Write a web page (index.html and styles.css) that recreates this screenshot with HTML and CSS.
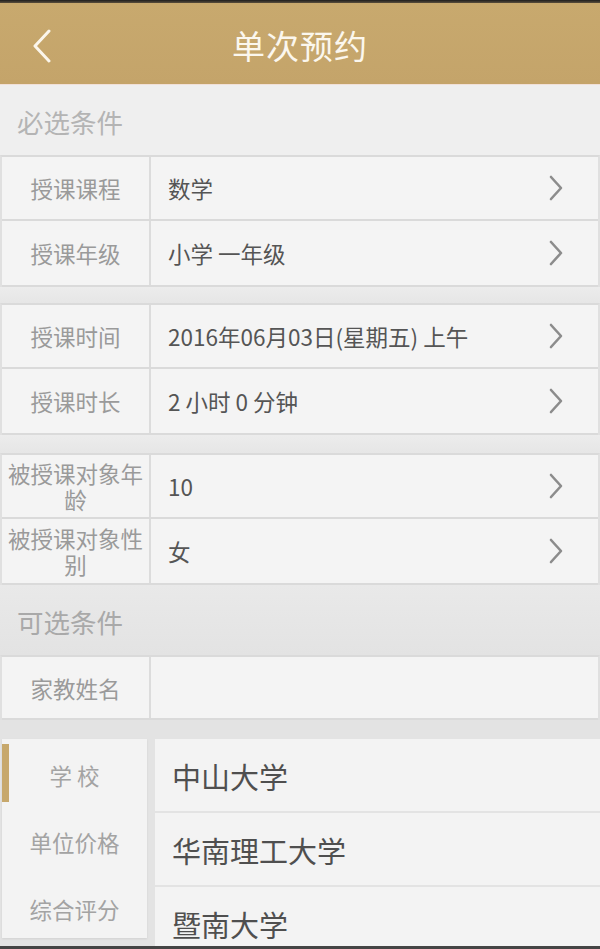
FILE: index.html
```html
<!DOCTYPE html>
<html lang="zh">
<head>
<meta charset="utf-8">
<title>单次预约</title>
<link rel="stylesheet" href="styles.css">
</head>
<body>
<div class="screen">
  <div class="topline"></div>
  <header class="appbar">
    <svg class="back" width="20" height="34" viewBox="0 0 20 34"><polyline points="17,2 3,17 17,32" fill="none" stroke="#fbf6ec" stroke-width="3" stroke-linecap="round" stroke-linejoin="round"/></svg>
    <h1 class="title">单次预约</h1>
  </header>
  <div class="pinkline"></div>

  <div class="section-title">必选条件</div>

  <div class="group">
    <div class="row"><div class="label">授课课程</div><div class="value">数学</div><svg class="chev" width="16" height="26" viewBox="0 0 16 26"><polyline points="3,2 13,13 3,24" fill="none" stroke="#8c8c8c" stroke-width="2.6" stroke-linecap="round" stroke-linejoin="round"/></svg></div>
    <div class="row"><div class="label">授课年级</div><div class="value">小学 一年级</div><svg class="chev" width="16" height="26" viewBox="0 0 16 26"><polyline points="3,2 13,13 3,24" fill="none" stroke="#8c8c8c" stroke-width="2.6" stroke-linecap="round" stroke-linejoin="round"/></svg></div>
  </div>
  <div class="gap g16"></div>
  <div class="group">
    <div class="row"><div class="label">授课时间</div><div class="value">2016年06月03日(星期五) 上午</div><svg class="chev" width="16" height="26" viewBox="0 0 16 26"><polyline points="3,2 13,13 3,24" fill="none" stroke="#8c8c8c" stroke-width="2.6" stroke-linecap="round" stroke-linejoin="round"/></svg></div>
    <div class="row"><div class="label">授课时长</div><div class="value">2 小时 0 分钟</div><svg class="chev" width="16" height="26" viewBox="0 0 16 26"><polyline points="3,2 13,13 3,24" fill="none" stroke="#8c8c8c" stroke-width="2.6" stroke-linecap="round" stroke-linejoin="round"/></svg></div>
  </div>
  <div class="gap g18"></div>
  <div class="group">
    <div class="row"><div class="label two">被授课对象年龄</div><div class="value">10</div><svg class="chev" width="16" height="26" viewBox="0 0 16 26"><polyline points="3,2 13,13 3,24" fill="none" stroke="#8c8c8c" stroke-width="2.6" stroke-linecap="round" stroke-linejoin="round"/></svg></div>
    <div class="row"><div class="label two">被授课对象性别</div><div class="value">女</div><svg class="chev" width="16" height="26" viewBox="0 0 16 26"><polyline points="3,2 13,13 3,24" fill="none" stroke="#8c8c8c" stroke-width="2.6" stroke-linecap="round" stroke-linejoin="round"/></svg></div>
  </div>

  <div class="section-title dark">可选条件</div>

  <div class="group">
    <div class="row short"><div class="label">家教姓名</div><div class="value"></div></div>
  </div>
  <div class="gap g18 darkgap"></div>

  <div class="panel">
    <nav class="menu">
      <div class="menu-item active">学 校</div>
      <div class="menu-item">单位价格</div>
      <div class="menu-item">综合评分</div>
    </nav>
    <ul class="list">
      <li>中山大学</li>
      <li>华南理工大学</li>
      <li>暨南大学</li>
    </ul>
  </div>
  <div class="bottomline"></div>
</div>
</body>
</html>
```
FILE: styles.css
```css
* { box-sizing: border-box; }
html, body { margin: 0; padding: 0; }
body {
  background: #efefef;
  font-family: "Noto Sans CJK SC", "Roboto", "Noto Sans", sans-serif;
}
.screen {
  width: 600px;
  height: 949px;
  overflow: hidden;
  display: flex;
  flex-direction: column;
  background: #efefef;
}
.topline {
  height: 3px;
  background: linear-gradient(#1e1e1e, #5a4f3c);
  flex: none;
}
.appbar {
  height: 81px;
  flex: none;
  background: linear-gradient(#c8a96e, #c4a46a);
  display: flex;
  align-items: center;
  justify-content: center;
  position: relative;
}
.back {
  position: absolute;
  left: 32px;
  top: 26px;
}
.title {
  margin: 0;
  color: #fbf7ee;
  font-size: 33px;
  font-weight: 400;
  letter-spacing: 1px;
  padding-top: 2px;
}
.pinkline {
  height: 1px;
  background: #f1e0d8;
  flex: none;
}
.section-title {
  height: 70px;
  flex: none;
  display: flex;
  align-items: center;
  padding-left: 17px;
  padding-top: 2px;
  font-size: 26.5px;
  color: #b4b4b4;
}
.section-title.dark {
  background: linear-gradient(#e9e9e9, #e3e3e3);
  color: #a9a9a9;
}
.group {
  flex: none;
  border-top: 2px solid #dadada;
  border-left: 2px solid #e0e0e0;
  border-right: 2px solid #e0e0e0;
  background: #f4f4f4;
}
.row {
  height: 66px;
  display: flex;
  align-items: center;
  border-bottom: 2px solid #dadada;
}
.row:first-child { height: 64px; }
.row.short { height: 63px; }
.label {
  width: 149px;
  align-self: stretch;
  display: flex;
  align-items: center;
  justify-content: center;
  text-align: center;
  border-right: 2px solid #dcdcdc;
  font-size: 22.5px;
  color: #9a9a9a;
  line-height: 26px;
  flex: none;
}
.label.two {
  padding: 0 3px;
  font-size: 22.5px;
}
.value {
  flex: 1;
  padding-left: 17px;
  font-size: 22.5px;
  color: #555;
}
.chev {
  margin-right: 34px;
  flex: none;
}
.gap { flex: none; background: linear-gradient(#ececec, #e6e6e6); }
.g16 { height: 16px; }
.g18 { height: 18px; }
.darkgap { background: #e3e3e3; }
.panel {
  flex: 1;
  min-height: 0;
  overflow: hidden;
  display: flex;
  gap: 8px;
  background: #e3e3e3;
  padding-top: 1px;
}
.menu {
  width: 145px;
  margin-left: 2px;
  margin-bottom: 8px;
  background: #f3f3f3;
  box-shadow: 0 1px 2px rgba(0,0,0,0.08);
  display: flex;
  flex-direction: column;
  padding-top: 3px;
}
.menu-item {
  height: 66px;
  display: flex;
  align-items: center;
  justify-content: center;
  font-size: 22.5px;
  color: #a3a3a3;
  position: relative;
  flex: none;
}
.menu-item.active::before {
  content: "";
  position: absolute;
  left: 0;
  top: 2px;
  width: 7px;
  height: 58px;
  background: #c7a86c;
}
.menu-item:nth-child(2) { padding-top: 2px; }
.menu-item:nth-child(3) { padding-top: 4px; }
.list {
  flex: 1;
  margin: 0;
  padding: 0;
  list-style: none;
  background: #f3f3f3;
  display: flex;
  flex-direction: column;
}
.list li {
  height: 74px;
  flex: none;
  display: flex;
  align-items: center;
  padding-left: 17px;
  padding-top: 2px;
  font-size: 29px;
  color: #4f4f4f;
  border-bottom: 2px solid #e3e3e3;
}
.list li:last-child {
  border-bottom: none;
  flex: 1;
  height: auto;
  align-items: flex-start;
  padding-top: 16px;
}
.bottomline {
  height: 3px;
  flex: none;
  background: #444;
}
```
